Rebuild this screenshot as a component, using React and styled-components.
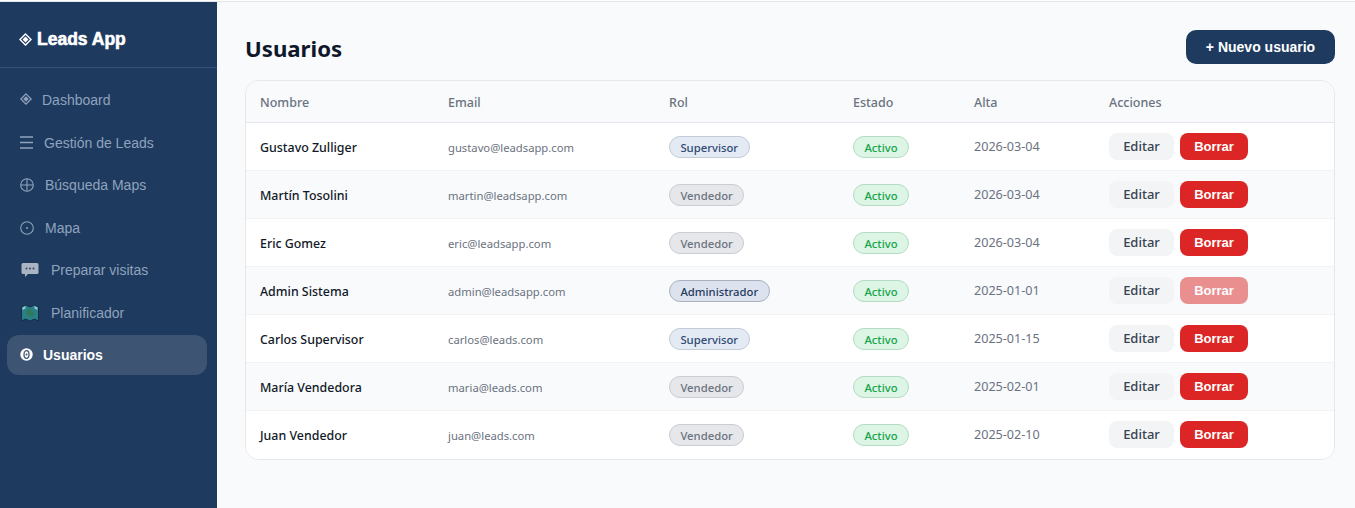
import styled, { createGlobalStyle } from "styled-components"

const GlobalStyle = createGlobalStyle`
* { box-sizing: border-box; }
html, body { margin: 0; padding: 0; height: 100%; background: #f8fafc; }
body { font-family: "Noto Sans", "Open Sans", sans-serif; overflow: hidden; }
`
const Page = styled.div`
height: 508px;
display: flex;
flex-direction: column;
`
const TopLine = styled.div`
height: 2px;
background: #fff;
border-bottom: 1px solid #e2e6ea;
flex: none;
`
const Shell = styled.div`
flex: 1;
display: flex;
min-height: 0;
`
const Sidebar = styled.aside`
width: 217px;
flex: none;
background: #1e3a5f;
display: flex;
flex-direction: column;
font-family: "Liberation Sans", Arial, sans-serif;
`
const Brand = styled.div`
height: 66px;
padding: 10px 18px 0 19px;
display: flex;
align-items: center;
gap: 5px;
color: #fff;
font-weight: 700;
font-size: 17.5px;
border-bottom: 1px solid #34507a;
-webkit-text-stroke: 0.6px #fff;
`
const Nav = styled.nav`
padding: 11px 10px 0 7px;
display: flex;
flex-direction: column;
`
const NavItem = styled.a`
height: ${p => (p.$active ? "40px" : "42.5px")};
margin-top: ${p => (p.$active ? "1px" : "0")};
padding-left: ${p => p.$pad}px;
display: flex;
align-items: center;
gap: ${p => p.$gap}px;
font-size: 14px;
font-weight: ${p => (p.$active ? 700 : 400)};
color: ${p => (p.$active ? "#fff" : "#8fa3bd")};
background: ${p => (p.$active ? "#3d5472" : "transparent")};
border-radius: 12px;
`
const IconBox = styled.span`
display: flex;
flex: none;
margin-bottom: ${p => p.$lift || 0}px;
`
const Main = styled.main`
flex: 1;
padding: 27px 20px 0 28px;
min-width: 0;
`
const Header = styled.header`
display: flex;
justify-content: space-between;
align-items: center;
height: 36px;
margin-bottom: 15px;
padding-top: 2px;
`
const Title = styled.h1`
margin: 0;
font-size: 22.2px;
font-weight: 700;
color: #0f172a;
`
const NewButton = styled.button`
width: 149px;
height: 34px;
margin-top: -2px;
border: none;
border-radius: 10px;
background: #1e3a5f;
color: #fff;
font-family: "Liberation Sans", Arial, sans-serif;
font-weight: 700;
font-size: 14px;
`
const Card = styled.section`
background: #fff;
border: 1px solid #e5e7eb;
border-radius: 14px;
overflow: hidden;
`
const Row = styled.div`
display: grid;
grid-template-columns: 188px 221px 184px 121px 135px 1fr;
align-items: center;
padding-left: 14px;
height: 48px;
background: ${p => (p.$odd ? "#f8fafc" : "#fff")};
border-bottom: 1px solid #f1f3f5;
&:last-child { border-bottom-color: transparent; }
`
const HeadRow = styled(Row)`
height: 42px;
padding-top: 2px;
background: #f8fafc;
border-bottom: 1px solid #e5e7eb;
`
const HeadCell = styled.div`
font-size: 12.5px;
font-weight: 500;
color: #6b7280;
`
const Name = styled.div`
padding-top: 2px;
font-size: 12.4px;
font-weight: 500;
color: #111827;
`
const Email = styled.div`
padding-top: 1px;
font-size: 11.25px;
color: #6b7280;
`
const JoinDate = styled.div`
font-size: 12.6px;
color: #6b7280;
`
const badgeColors = {
  Supervisor: ["#e4eaf4", "#2f4a74", "#c3cbd8"],
  Vendedor: ["#e5e7eb", "#6b7280", "#c9ccd2"],
  Administrador: ["#dde3ee", "#1e3a5f", "#a9b1bf"],
  Activo: ["#dcf5e5", "#16a34a", "#b4dcc2"],
}
const Badge = styled.span`
display: inline-flex;
align-items: center;
height: 22px;
padding: 0 10.4px;
border-radius: 11px;
font-size: 11.3px;
font-weight: 500;
background: ${p => badgeColors[p.$kind][0]};
color: ${p => badgeColors[p.$kind][1]};
border: 1px solid ${p => badgeColors[p.$kind][2]};
`
const Actions = styled.div`
display: flex;
gap: 6px;
align-items: center;
`
const Edit = styled.button`
width: 65px;
height: 27px;
border: none;
border-radius: 8px;
background: #f3f4f6;
color: #374151;
font-family: "Noto Sans", sans-serif;
font-size: 13px;
font-weight: 500;
padding: 0 0 2px;
`
const Delete = styled.button`
width: 68px;
height: 27px;
border: none;
border-radius: 8px;
background: #dc2626;
color: #fff;
opacity: ${p => (p.disabled ? 0.5 : 1)};
font-family: "Liberation Sans", Arial, sans-serif;
font-size: 13px;
font-weight: 700;
padding: 0;
`

const Diamond = ({ size = 12, color }) => (
  <svg width={size} height={size} viewBox="0 0 14 14">
    <path d="M7 1 13 7 7 13 1 7Z" fill="none" stroke={color} strokeWidth="1.5" />
    <path d="M7 3.800 10.200 7 7 10.200 3.800 7Z" fill={color} />
  </svg>
)
const Menu = () => (
  <svg width="13" height="13" viewBox="0 0 13 13" stroke="#8fa3bd" strokeWidth="1.4">
    <path d="M0 1h13M0 6.500h13M0 12h13" />
  </svg>
)
const Globe = () => (
  <svg width="14" height="14" viewBox="0 0 14 14" fill="none" stroke="#8fa3bd" strokeWidth="1.1">
    <circle cx="7" cy="7" r="6.300" />
    <path d="M.7 7h12.600M7 .7v12.600" />
  </svg>
)
const Dot = () => (
  <svg width="14" height="14" viewBox="0 0 14 14" fill="none" stroke="#8fa3bd" strokeWidth="1.1">
    <circle cx="7" cy="7" r="6.300" />
    <circle cx="7" cy="7" r="1" fill="#8fa3bd" stroke="none" />
  </svg>
)
const Chat = () => (
  <svg width="18" height="16" viewBox="0 0 18 16">
    <path d="M2 1h14a1.500 1.500 0 0 1 1.500 1.500v8A1.500 1.500 0 0 1 16 12H7l-3 3v-3H2A1.500 1.500 0 0 1 .5 10.500v-8A1.500 1.500 0 0 1 2 1Z" fill="#aab4c2" />
    <circle cx="5.500" cy="6.500" r="1" fill="#33465f" />
    <circle cx="9" cy="6.500" r="1" fill="#33465f" />
    <circle cx="12.500" cy="6.500" r="1" fill="#33465f" />
  </svg>
)
const MapBook = () => (
  <svg width="18" height="18" viewBox="0 0 18 18">
    <path d="M.5 3 4.500 1 9 3l4.500-2 4 2v14l-4-2L9 17l-4.500-2-4 2Z" fill="#2b7f86" stroke="#10243c" strokeWidth=".8" />
    <path d="M5 6.500 8 5l3.500 2 2 3.500-3 2.500L7 11.500l-2-2Z" fill="#2f7a5c" />
    <path d="M1.500 3.500 4.500 2v2.500L1.500 6Z" fill="#9cc4d4" />
    <path d="M13.500 2l3 1.500V6l-3-1.500Z" fill="#9cc4d4" />
  </svg>
)
const UserEye = () => (
  <svg width="13" height="13" viewBox="0 0 13 13">
    <circle cx="6.500" cy="6.500" r="6.200" fill="#fff" />
    <ellipse cx="6.500" cy="6.500" rx="2.500" ry="3.800" fill="none" stroke="#3d5472" strokeWidth="1.300" />
    <circle cx="6.500" cy="6.500" r="1" fill="#3d5472" />
  </svg>
)

const navItems = [
  { label: "Dashboard", icon: <Diamond color="#8fa3bd" />, pad: 13, gap: 10, lift: 3 },
  { label: "Gestión de Leads", icon: <Menu />, pad: 13, gap: 11 },
  { label: "Búsqueda Maps", icon: <Globe />, pad: 13, gap: 11 },
  { label: "Mapa", icon: <Dot />, pad: 13, gap: 11 },
  { label: "Preparar visitas", icon: <Chat />, pad: 14, gap: 12 },
  { label: "Planificador", icon: <MapBook />, pad: 14, gap: 12 },
  { label: "Usuarios", icon: <UserEye />, pad: 13, gap: 10, lift: 2, active: true },
]

const users = [
  ["Gustavo Zulliger", "gustavo@leadsapp.com", "Supervisor", "2026-03-04"],
  ["Martín Tosolini", "martin@leadsapp.com", "Vendedor", "2026-03-04"],
  ["Eric Gomez", "eric@leadsapp.com", "Vendedor", "2026-03-04"],
  ["Admin Sistema", "admin@leadsapp.com", "Administrador", "2025-01-01"],
  ["Carlos Supervisor", "carlos@leads.com", "Supervisor", "2025-01-15"],
  ["María Vendedora", "maria@leads.com", "Vendedor", "2025-02-01"],
  ["Juan Vendedor", "juan@leads.com", "Vendedor", "2025-02-10"],
]

export default function App() {
  return (
    <Page>
      <GlobalStyle />
      <TopLine />
      <Shell>
        <Sidebar>
          <Brand>
            <Diamond size={13} color="#fff" />
            Leads App
          </Brand>
          <Nav>
            {navItems.map(item => (
              <NavItem key={item.label} $active={item.active} $pad={item.pad} $gap={item.gap}>
                <IconBox $lift={item.lift}>{item.icon}</IconBox>
                {item.label}
              </NavItem>
            ))}
          </Nav>
        </Sidebar>
        <Main>
          <Header>
            <Title>Usuarios</Title>
            <NewButton>+ Nuevo usuario</NewButton>
          </Header>
          <Card>
            <HeadRow>
              {["Nombre", "Email", "Rol", "Estado", "Alta", "Acciones"].map(h => (
                <HeadCell key={h}>{h}</HeadCell>
              ))}
            </HeadRow>
            {users.map(([name, email, role, date], i) => (
              <Row key={email} $odd={i % 2 === 1}>
                <Name>{name}</Name>
                <Email>{email}</Email>
                <div><Badge $kind={role}>{role}</Badge></div>
                <div><Badge $kind="Activo">Activo</Badge></div>
                <JoinDate>{date}</JoinDate>
                <Actions>
                  <Edit>Editar</Edit>
                  <Delete disabled={role === "Administrador"}>Borrar</Delete>
                </Actions>
              </Row>
            ))}
          </Card>
        </Main>
      </Shell>
    </Page>
  )
}
